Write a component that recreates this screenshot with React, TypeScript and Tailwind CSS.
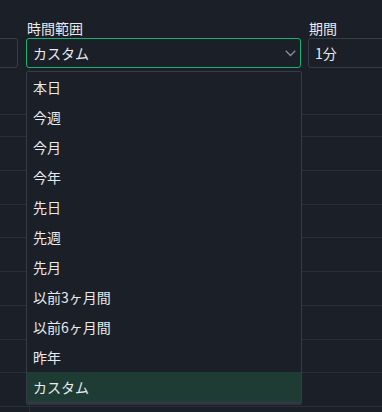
import React from 'react';

const options = [
  '本日',
  '今週',
  '今月',
  '今年',
  '先日',
  '先週',
  '先月',
  '以前3ヶ月間',
  '以前6ヶ月間',
  '昨年',
  'カスタム',
];

// heights of the table rows behind the open dropdown
const rowHeights = [45, 21, 33, 33, 32, 33, 33, 33, 32, 33];

const Chevron = () => (
  <svg width="11" height="7" viewBox="0 0 11 7" fill="none" className="mr-[4px] shrink-0">
    <polyline points="0.75,0.75 5.5,5.5 10.25,0.75" stroke="#8a909b" strokeWidth="1.3" />
  </svg>
);

const App: React.FC = () => {
  const selected = 'カスタム';

  return (
    <div className="relative w-[382px] h-[412px] overflow-hidden bg-[#1b1f27] text-[#e8eaee] font-['Noto_Sans_CJK_JP','Noto_Sans',sans-serif]">
      <div className="flex gap-2 pt-[19px]">
        <div className="w-[100px] -ml-[82px] shrink-0">
          <div className="h-[19px]" />
          <div className="h-[30px] rounded-[3px] border border-[#373c47]" />
        </div>

        <div className="relative w-[275px] shrink-0">
          <div className="text-[14px] leading-[19px] pl-[1px]">時間範囲</div>
          <div className="flex h-[30px] items-center justify-between rounded-[3px] border border-[#18b46f] pl-[6px] text-[14px]">
            <span>{selected}</span>
            <Chevron />
          </div>

          <ul className="absolute left-0 top-[52px] z-10 w-[276px] rounded-[2px] border border-[#363b46] bg-[#1b1f27] shadow-[0_2px_0_#2f3440]">
            {options.map((opt) => (
              <li
                key={opt}
                className={`flex h-[30px] items-center pl-[6px] text-[14px] ${
                  opt === selected ? 'bg-[#1e3b34]' : ''
                }`}
              >
                {opt}
              </li>
            ))}
          </ul>
        </div>

        <div className="w-[100px] shrink-0 -ml-[1px]">
          <div className="text-[14px] leading-[19px] pl-[1px]">期間</div>
          <div className="flex h-[30px] items-center rounded-[3px] border border-[#373c47] pl-[6px] text-[14px]">
            1分
          </div>
        </div>
      </div>

      <div className="mt-[1px]">
        {rowHeights.map((h, i) => (
          <div key={i} className="flex border-b border-[#2a2e37]" style={{ height: h + 1 }}>
            <div className="w-[30px] shrink-0 border-r border-[#2a2e37]" />
            <div className="flex-1" />
          </div>
        ))}
        <div className="flex h-[20px]">
          <div className="w-[30px] shrink-0 border-r border-[#2a2e37]" />
        </div>
      </div>
    </div>
  );
};

export default App;
